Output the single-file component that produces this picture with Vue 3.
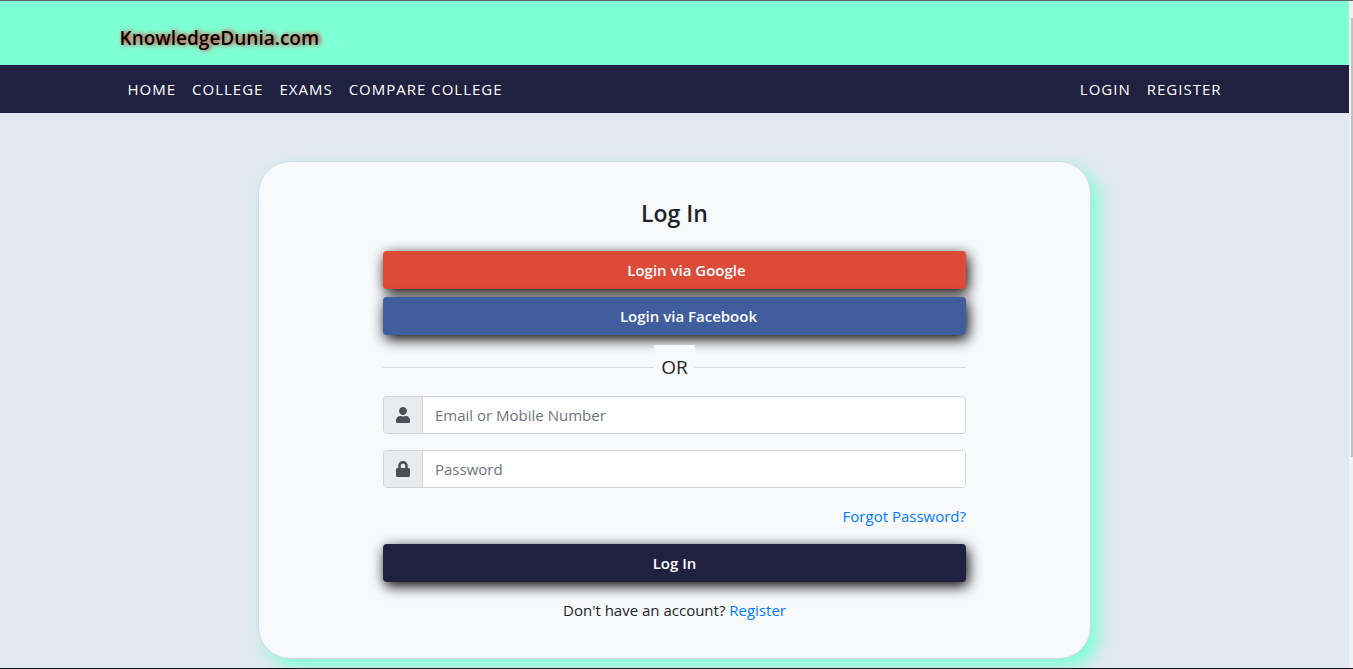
<script setup>
import { ref } from 'vue'

const mainLinks = ['Home', 'College', 'Exams', 'Compare College']
const userLinks = ['Login', 'Register']
const account = ref('')
const password = ref('')
</script>

<template>
  <div class="page">
    <div class="content">
      <header class="topbar">
        <div class="container">
          <a class="brand" href="#">KnowledgeDunia.com</a>
        </div>
      </header>
      <nav class="navbar" aria-label="Main">
        <div class="container nav-row">
          <ul class="nav-list">
            <li v-for="link in mainLinks" :key="link"><a href="#">{{ link }}</a></li>
          </ul>
          <ul class="nav-list">
            <li v-for="link in userLinks" :key="link"><a href="#">{{ link }}</a></li>
          </ul>
        </div>
      </nav>
      <main class="main">
        <section class="card">
          <form class="form" @submit.prevent>
            <h1 class="title">Log In</h1>
            <button type="button" class="btn google">Login via Google</button>
            <button type="button" class="btn facebook">Login via Facebook</button>
            <div class="divider"><span>OR</span></div>
            <div class="field">
              <label for="account" aria-label="Email or Mobile Number">
                <svg width="14" height="16" viewBox="0 0 448 512" aria-hidden="true">
                  <path fill="currentColor" d="M224 256c70.700 0 128-57.300 128-128S294.700 0 224 0 96 57.300 96 128s57.300 128 128 128zm89.600 32h-16.700c-22.200 10.200-46.900 16-72.900 16s-50.600-5.800-72.900-16h-16.700C60.200 288 0 348.200 0 422.400V464c0 26.500 21.500 48 48 48h352c26.500 0 48-21.500 48-48v-41.600c0-74.200-60.200-134.400-134.400-134.400z" />
                </svg>
              </label>
              <input id="account" v-model="account" type="text" placeholder="Email or Mobile Number" />
            </div>
            <div class="field">
              <label for="password" aria-label="Password">
                <svg width="14" height="16" viewBox="0 0 448 512" aria-hidden="true">
                  <path fill="currentColor" d="M400 224h-24v-72C376 68.200 307.800 0 224 0S72 68.200 72 152v72H48c-26.500 0-48 21.500-48 48v192c0 26.500 21.500 48 48 48h352c26.500 0 48-21.500 48-48V272c0-26.500-21.500-48-48-48zm-104 0H152v-72c0-39.700 32.300-72 72-72s72 32.300 72 72v72z" />
                </svg>
              </label>
              <input id="password" v-model="password" type="password" placeholder="Password" />
            </div>
            <p class="forgot"><a href="#">Forgot Password?</a></p>
            <button type="submit" class="btn submit">Log In</button>
            <p class="signup">Don't have an account? <a href="#">Register</a></p>
          </form>
        </section>
      </main>
    </div>
    <div class="scrollbar" aria-hidden="true"><div class="thumb"></div></div>
  </div>
</template>

<style>
html,
body,
#app {
  height: 100%;
}

body {
  overflow: hidden;
}
</style>

<style scoped>
.page,
.page * {
  box-sizing: border-box;
}

.page {
  display: flex;
  height: 100%;
  border-top: 1px solid #5f6368;
  border-bottom: 1px solid #17171b;
  background: #e1e8f0;
  color: #212529;
  font-family: "Segoe UI", "Open Sans", "Noto Sans", sans-serif;
  font-size: 15px;
  line-height: 24px;
}

.content {
  flex: 1;
  min-width: 0;
  overflow: hidden;
}

.scrollbar {
  width: 4px;
  padding: 17px 0 0 2px;
  background: #f1f1f1;
}

.thumb {
  height: 67.5%;
  background: #c1c1c1;
}

.container {
  max-width: 1140px;
  margin: 0 auto;
  padding: 0 15px;
}

.topbar {
  height: 64px;
  padding-top: 22px;
  background: #7fffd4;
}

.brand {
  display: block;
  color: #000;
  font-size: 19px;
  font-weight: 600;
  line-height: 30px;
  text-decoration: none;
  text-shadow: 2px 0 5px #f00;
}

.navbar {
  padding: 4px 0;
  background: #202040;
}

.nav-row {
  display: flex;
  justify-content: space-between;
}

.nav-list {
  display: flex;
  margin: 0;
  padding: 0;
  list-style: none;
}

.nav-list a {
  display: block;
  padding: 8px;
  color: #fff;
  letter-spacing: 1px;
  text-decoration: none;
  text-transform: uppercase;
}

.main {
  padding: 48px 15px;
}

.card {
  max-width: 833px;
  margin: 0 auto;
  padding: 36px 15px;
  border: 1px solid #d6d9dc;
  border-radius: 32px;
  background: #f8f9fb;
  box-shadow: 8px 8px 16px #7fffd4;
}

.form {
  display: flex;
  flex-direction: column;
  max-width: 583px;
  margin: 0 auto;
}

.title {
  margin: 0 0 22px;
  font-size: 23px;
  font-weight: 600;
  line-height: 31px;
  text-align: center;
}

.btn {
  height: 38px;
  margin: 0 0 8px;
  padding: 0 12px;
  border: 0;
  border-radius: 4px;
  color: #fff;
  font: inherit;
  font-weight: 600;
  box-shadow: 2px 4px 14px #000;
}

.google {
  padding-left: 36px;
  background: #dc4a38;
}

.facebook {
  padding-left: 40px;
  background: #405d9d;
}

.submit {
  background: #202040;
}

.divider {
  display: flex;
  justify-content: center;
  margin: 2px 0 7px;
  background: linear-gradient(#d9dcdf, #d9dcdf) 0 22px / 100% 1px no-repeat;
}

.divider span {
  padding: 8px 7px;
  background: #f8f9fb;
  font-size: 19px;
  line-height: 28px;
}

.field {
  display: flex;
  height: 38px;
  margin-bottom: 16px;
  border: 1px solid #ced4da;
  border-radius: 4px;
  overflow: hidden;
  background: #fff;
}

.field label {
  display: flex;
  align-items: center;
  justify-content: center;
  width: 39px;
  border-right: 1px solid #ced4da;
  background: #e9ecef;
  color: #495057;
}

.field input {
  flex: 1;
  min-width: 0;
  padding: 0 12px;
  border: 0;
  outline: 0;
  background: #fff;
  color: #495057;
  font: inherit;
}

.field input::placeholder {
  color: #6c757d;
  opacity: 1;
}

.forgot {
  margin: 0 0 16px;
  text-align: right;
}

.form a {
  color: #007bff;
  text-decoration: none;
}

.signup {
  margin: 8px 0 0;
  text-align: center;
}
</style>
